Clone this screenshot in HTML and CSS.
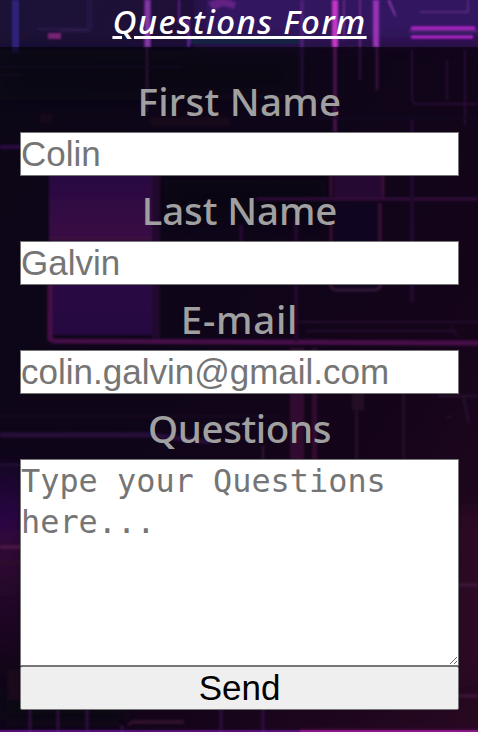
FILE: index.html
```html
<!DOCTYPE html>
<html lang="en">
<head>
<meta charset="utf-8">
<title>Questions Form</title>
<link rel="stylesheet" href="styles.css">
</head>
<body>
<svg class="backdrop" viewBox="0 0 478 732" preserveAspectRatio="none" aria-hidden="true">
  <defs>
    <linearGradient id="base" x1="0" y1="0" x2="1" y2="1">
      <stop offset="0" stop-color="#1b1236"/><stop offset=".45" stop-color="#240c3a"/>
      <stop offset=".7" stop-color="#310b3d"/><stop offset="1" stop-color="#5c144e"/>
    </linearGradient>
    <linearGradient id="panel" x1="0" y1="0" x2="0" y2="1">
      <stop offset="0" stop-color="#5f1899"/><stop offset=".37" stop-color="#821c9d"/>
      <stop offset=".4" stop-color="#6b1b9c"/><stop offset="1" stop-color="#581696"/>
    </linearGradient>
    <linearGradient id="side" x1="0" y1="0" x2="0" y2="1">
      <stop offset="0" stop-color="#35105f"/><stop offset=".28" stop-color="#630fa1"/>
      <stop offset=".36" stop-color="#751580"/><stop offset="1" stop-color="#260d35"/>
    </linearGradient>
    <filter id="soft" x="-10%" y="-10%" width="120%" height="120%"><feGaussianBlur stdDeviation="1"/></filter>
    <filter id="wide" x="-50%" y="-50%" width="200%" height="200%"><feGaussianBlur stdDeviation="9"/></filter>
  </defs>
  <rect width="478" height="732" fill="url(#base)"/>
  <g filter="url(#wide)">
    <rect x="200" y="-20" width="298" height="63" fill="#30135e"/>
    <rect x="-20" y="465" width="46" height="210" fill="url(#side)"/>
    <rect x="455" y="510" width="45" height="170" fill="#661455"/>
    <rect x="0" y="50" width="300" height="50" fill="#110f26" opacity=".6"/>
    <rect x="165" y="180" width="160" height="40" fill="#190c29"/>
    <rect x="0" y="690" width="125" height="30" fill="#15142b"/>
  </g>
  <g filter="url(#soft)">
    <path d="M12 0h7v53h-7z" fill="#2f207b"/>
    <path d="M88 0v29h-50M91 0v30M60 31h30" stroke="#39245f" fill="none"/>
    <path d="M48 33h13v6H48z" fill="#782074"/>
    <path d="M145 0h5v47h-5zM147 47v65" fill="#883bad" stroke="#6b2688" stroke-width="2"/>
    <path d="M178 0h2v20h10v27h-3V23h-9z" fill="#59208b"/>
    <path d="M208 2l14-4 14 4-2 7-10-3-11 4z" fill="#642083"/>
    <path d="M190 36h110v8H190z" fill="#182043"/>
    <path d="M332 0h6v47h-6z" fill="#c436c4"/>
    <path d="M335 47v85" stroke="#9d28a3" stroke-width="4"/>
    <path d="M302 0v105" stroke="#53247d" stroke-width="3"/>
    <path d="M344 0v40M360 0v80" stroke="#672581" stroke-width="2"/>
    <path d="M373 0h6v47h-6z" fill="#9833b5"/>
    <path d="M377 47v43" stroke="#7b2585" stroke-width="3"/>
    <path d="M387 0h3l6 15-1 2z" fill="#7c36a4"/>
    <path d="M411 28h64M411 37h62" stroke="#b826cf" stroke-width="3"/>
    <path d="M478 31h-69M420 12h48V0" stroke="#54277a" fill="none" stroke-width="2"/>
    <path d="M412 50v50l3 4h63M447 60v40M465 50v75" stroke="#5c1b7a" fill="none" stroke-width="2"/>
    <path d="M0 67h180M0 75h21M220 96h90M315 118h163" stroke="#2b1249" stroke-width="2"/>
    <path d="M40 114h12v9H40zM150 117h80v9h-80z" fill="#35133e"/>
    <path d="M0 147h24" stroke="#6a1999" stroke-width="4"/>
    <path d="M49 175h103v160H52q-3-1-3-5z" fill="url(#panel)"/>
    <path d="M152 175h8v163h-8z" fill="#4d1468"/>
    <path d="M49 238h103" stroke="#9e2883" stroke-width="2"/>
    <path d="M50 285v54l4 2 425 2" stroke="#a423a9" fill="none" stroke-width="5"/>
    <path d="M334 170h49v29h-49z" fill="#591877"/>
    <path d="M335 203h45v84h-45z" fill="#27104e"/>
    <path d="M331 170v27M383 170v30M380 203v84M331 222v65" stroke="#84267a" stroke-width="3"/>
    <path d="M256 199h222" stroke="#741f89" stroke-width="3"/>
    <path d="M331 286q1 4 7 4h36q6 0 7-6" stroke="#723484" fill="none" stroke-width="3"/>
    <path d="M412 120v182M296 220v122M241 225v23" stroke="#50176b" stroke-width="4"/>
    <path d="M298 322h180M306 331h150M451 325l6 12" stroke="#531b69" stroke-width="2"/>
    <path d="M290 348h14v160h-14zM312 348h5v160h-5z" fill="#751b6f"/>
    <path d="M352 390h12v20h-12zM355 410h3v50h-3zM402 390h3v70h-3z" fill="#512058"/>
    <path d="M0 416h285M200 426h80" stroke="#36164d" stroke-width="2"/>
    <path d="M0 435h150l60 7" stroke="#5a2285" fill="none" stroke-width="5"/>
    <path d="M0 465h285" stroke="#421c70" stroke-width="4"/>
    <path d="M263 446v24" stroke="#793577" stroke-width="2"/>
    <path d="M463 395l6 28M478 396h-40M447 417h4" stroke="#5c2e70" fill="none" stroke-width="2"/>
    <path d="M0 547h21" stroke="#a43896" stroke-width="4"/>
    <path d="M0 563h21" stroke="#671b66" stroke-width="4"/>
    <path d="M458 585h20M458 696h20" stroke="#92328d" stroke-width="3"/>
    <path d="M8 670h12v30H8z" fill="#3d1240"/>
    <path d="M128 724h3M131 722h53" stroke="#6d2764" stroke-width="4"/>
    <path d="M30 709v23M58 709v23M87 709v23M122 725v7M221 709v23M263 709v23" stroke="#6a2392" stroke-width="3"/>
    <path d="M300 731h178" stroke="#8b1788" stroke-width="5"/>
    <path d="M0 731h300" stroke="#5d1687" stroke-width="3"/>
  </g>
</svg>
<main class="page">
  <h1 class="title">Questions Form</h1>
  <form class="form">
    <label class="label label-first" for="first">First Name</label>
    <input class="field" id="first" type="text" placeholder="Colin">
    <label class="label label-last" for="last">Last Name</label>
    <input class="field" id="last" type="text" placeholder="Galvin">
    <label class="label label-email" for="email">E-mail</label>
    <input class="field" id="email" type="email" placeholder="colin.galvin@gmail.com">
    <label class="label label-questions" for="questions">Questions</label>
    <textarea class="field message" id="questions" placeholder="Type your Questions here..."></textarea>
    <button class="send" type="button">Send</button>
  </form>
</main>
</body>
</html>
```

FILE: styles.css
```css
* { box-sizing: border-box; }
body {
  margin: 0;
  height: 732px;
  overflow: hidden;
  background: #180b28;
  font-family: "Noto Sans", sans-serif;
}
.backdrop {
  position: absolute;
  inset: 0;
  width: 478px;
  height: 732px;
}
.page { position: relative; }
.title {
  margin: 0;
  height: 47px;
  padding-left: 1px;
  font-size: 33px;
  font-weight: 500;
  font-style: italic;
  line-height: 43px;
  letter-spacing: 1.4px;
  text-align: center;
  color: #fff;
  text-decoration: underline;
  text-decoration-thickness: 3px;
  text-underline-offset: 2px;
}
.form {
  display: flex;
  flex-direction: column;
  height: 683px;
  padding: 20px 19px 20px 20px;
  background: rgba(0, 0, 0, .57);
}
.label {
  height: 65px;
  line-height: 68px;
  font-size: 38.5px;
  font-weight: 500;
  text-align: center;
  color: #a0a0a0;
}
.label-first { letter-spacing: .3px; }
.label-last { letter-spacing: -.1px; }
.label-email { letter-spacing: .7px; }
.label-questions { letter-spacing: -.4px; }
.field {
  display: block;
  width: 100%;
  height: 44px;
  margin: 0;
  padding: 0;
  border: 1px solid #767676;
  border-radius: 0;
  background: #fff;
  font: 35px "Liberation Sans", Arial, sans-serif;
}
.field::placeholder { color: #757575; }
.message {
  height: 207px;
  padding: 1px 0;
  font: 31.9px/41px "DejaVu Sans Mono", monospace;
  resize: vertical;
}
.send {
  height: 44px;
  padding: 0;
  border: 1px solid #767676;
  border-radius: 2px;
  background: #efefef;
  color: #000;
  font: 35px "Liberation Sans", Arial, sans-serif;
}
```
